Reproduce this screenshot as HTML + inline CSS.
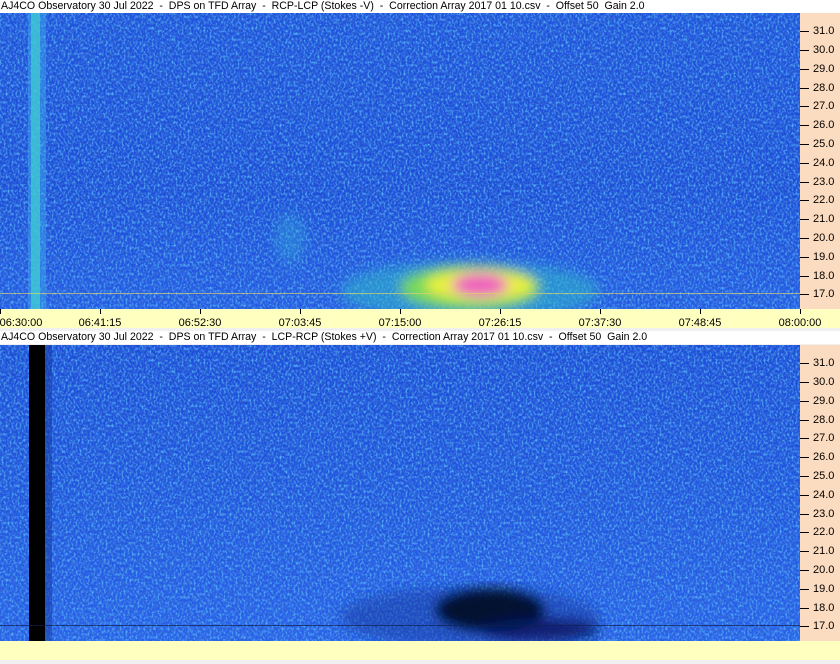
<!DOCTYPE html>
<html><head><style>
body{margin:0;width:840px;height:664px;background:#f0f0f0;position:relative;overflow:hidden;font-family:"Liberation Sans",sans-serif;font-size:10.6px;color:#000}
.t{position:absolute;left:0;width:840px;height:13px;background:#fff;line-height:12px;white-space:pre;padding-left:1px;box-sizing:border-box}
.ax{position:absolute;left:800px;width:40px;background:#fcdcc0;font-size:11px}
.ax div{position:absolute;left:0;width:40px;height:12px;line-height:12px}
.ax div:before{content:"";position:absolute;left:0;top:6px;width:9px;height:1px;background:#000}
.ax div span{position:absolute;left:13px}
.tb{position:absolute;left:0;width:840px;height:19px;background:#ffffc0;font-size:11px}
.tl{position:absolute;top:8px;line-height:12px;transform:translateX(-50%)}
.tk{position:absolute;top:0;width:1px;height:5px;background:#000}
svg{position:absolute;left:0}
</style></head><body>
<div class="t" style="top:0">AJ4CO Observatory 30 Jul 2022  -  DPS on TFD Array  -  RCP-LCP (Stokes -V)  -  Correction Array 2017 01 10.csv  -  Offset 50  Gain 2.0</div>
<svg style="top:13px" width="800" height="296">
<defs>
<filter id="n" x="0" y="0" width="100%" height="100%"><feTurbulence type="fractalNoise" baseFrequency="0.5 0.35" numOctaves="2" seed="3"/><feColorMatrix values="0 0 0 0 0.1  0 0 0 0 0.5  0 0 0 0 1  0 0 0 2.5 -1.1"/></filter>
<filter id="d" x="0" y="0" width="100%" height="100%"><feTurbulence type="fractalNoise" baseFrequency="0.6 0.4" numOctaves="2" seed="9"/><feColorMatrix values="0 0 0 0 0.05  0 0 0 0 0.15  0 0 0 0 0.6  0 0 0 2.5 -1.2"/></filter>
<filter id="b"><feGaussianBlur stdDeviation="6"/></filter>
<linearGradient id="g1" x1="0" y1="0" x2="0" y2="1"><stop offset="0" stop-color="#1f52dc"/><stop offset="0.6" stop-color="#1c4cd8"/><stop offset="1" stop-color="#245ae4"/></linearGradient>
</defs>
<rect width="800" height="296" fill="url(#g1)"/>
<rect width="800" height="296" filter="url(#n)"/>
<rect width="800" height="296" filter="url(#d)"/>
<rect x="28" width="18" height="296" fill="#3aa8e8" opacity="0.5"/>
<rect x="31" width="9" height="296" fill="#40d0d0" opacity="0.7"/>
<g filter="url(#b)">
<ellipse cx="470" cy="278" rx="130" ry="30" fill="#30b8c8" opacity="0.55"/>
<ellipse cx="290" cy="225" rx="15" ry="25" fill="#30a8d8" opacity="0.4"/>
<ellipse cx="470" cy="275" rx="70" ry="22" fill="#80e050" opacity="0.9"/>
<ellipse cx="480" cy="272" rx="55" ry="16" fill="#e8f040"/>
<ellipse cx="480" cy="272" rx="28" ry="12" fill="#f060c0"/>
</g>
<rect y="280" width="800" height="1" fill="#d8d070" opacity="0.7"/>
</svg>
<div class="ax" style="top:13px;height:296px">
<div style="top:12px"><span>31.0</span></div><div style="top:31px"><span>30.0</span></div><div style="top:50px"><span>29.0</span></div><div style="top:69px"><span>28.0</span></div><div style="top:87px"><span>27.0</span></div><div style="top:106px"><span>26.0</span></div><div style="top:125px"><span>25.0</span></div><div style="top:144px"><span>24.0</span></div><div style="top:163px"><span>23.0</span></div><div style="top:181px"><span>22.0</span></div><div style="top:200px"><span>21.0</span></div><div style="top:219px"><span>20.0</span></div><div style="top:238px"><span>19.0</span></div><div style="top:257px"><span>18.0</span></div><div style="top:275px"><span>17.0</span></div>
</div>
<div class="tb" style="top:309px">
<div class="tk" style="left:0"></div><div class="tk" style="left:100px"></div><div class="tk" style="left:200px"></div><div class="tk" style="left:300px"></div><div class="tk" style="left:400px"></div><div class="tk" style="left:500px"></div><div class="tk" style="left:600px"></div><div class="tk" style="left:700px"></div><div class="tk" style="left:800px"></div>
<div class="tl" style="left:21px">06:30:00</div><div class="tl" style="left:100px">06:41:15</div><div class="tl" style="left:200px">06:52:30</div><div class="tl" style="left:300px">07:03:45</div><div class="tl" style="left:400px">07:15:00</div><div class="tl" style="left:500px">07:26:15</div><div class="tl" style="left:600px">07:37:30</div><div class="tl" style="left:700px">07:48:45</div><div class="tl" style="left:800px">08:00:00</div>
</div>
<div class="t" style="top:331px">AJ4CO Observatory 30 Jul 2022  -  DPS on TFD Array  -  LCP-RCP (Stokes +V)  -  Correction Array 2017 01 10.csv  -  Offset 50  Gain 2.0</div>
<svg style="top:345px" width="800" height="296">
<defs><linearGradient id="g2" x1="0" y1="0" x2="0" y2="1"><stop offset="0" stop-color="#1c4cd8"/><stop offset="0.5" stop-color="#2054de"/><stop offset="1" stop-color="#2860ea"/></linearGradient></defs>
<rect width="800" height="296" fill="url(#g2)"/>
<rect width="800" height="296" filter="url(#n)"/>
<rect width="800" height="296" filter="url(#d)"/>
<rect x="44" width="8" height="296" fill="#1838a0" opacity="0.5"/>
<g filter="url(#b)">
<ellipse cx="470" cy="272" rx="130" ry="30" fill="#1838a0" opacity="0.5"/>
<ellipse cx="490" cy="265" rx="55" ry="22" fill="#000820" opacity="0.9"/>
<ellipse cx="540" cy="285" rx="60" ry="12" fill="#081860" opacity="0.8"/>
</g>
<rect x="29" width="16" height="296" fill="#000"/>
<rect y="280" width="800" height="1" fill="#102050" opacity="0.7"/>
</svg>
<div class="ax" style="top:345px;height:296px">
<div style="top:12px"><span>31.0</span></div><div style="top:31px"><span>30.0</span></div><div style="top:50px"><span>29.0</span></div><div style="top:69px"><span>28.0</span></div><div style="top:87px"><span>27.0</span></div><div style="top:106px"><span>26.0</span></div><div style="top:125px"><span>25.0</span></div><div style="top:144px"><span>24.0</span></div><div style="top:163px"><span>23.0</span></div><div style="top:181px"><span>22.0</span></div><div style="top:200px"><span>21.0</span></div><div style="top:219px"><span>20.0</span></div><div style="top:238px"><span>19.0</span></div><div style="top:257px"><span>18.0</span></div><div style="top:275px"><span>17.0</span></div>
</div>
<div class="tb" style="top:641px"></div>
</body></html>
